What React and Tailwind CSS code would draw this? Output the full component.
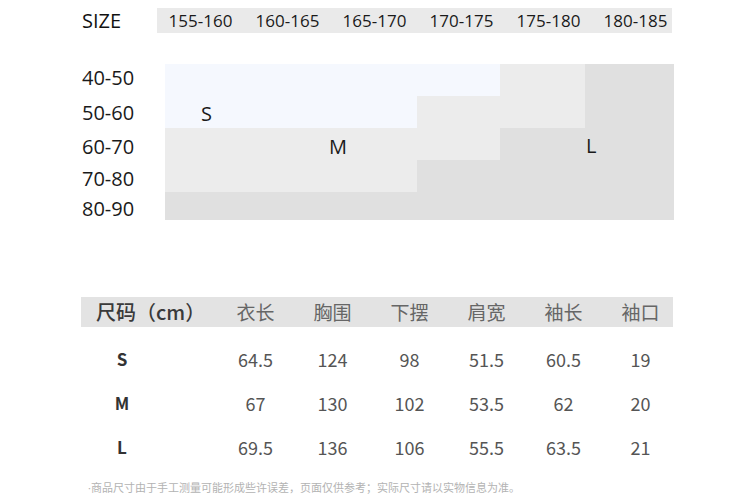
import React from "react";

const heights = ["155-160", "160-165", "165-170", "170-175", "175-180", "180-185"];
const weights = [
  { label: "40-50", h: "h-[35px]" },
  { label: "50-60", h: "h-[35px]" },
  { label: "60-70", h: "h-[33px]" },
  { label: "70-80", h: "h-[31px]" },
  { label: "80-90", h: "h-[30px]" },
];

const S = "bg-[#f5f8fe]";
const M = "bg-[#ececec]";
const L = "bg-[#e0e0e0]";

const headers = ["衣长", "胸围", "下摆", "肩宽", "袖长", "袖口"];
const rows = [
  { size: "S", values: ["64.5", "124", "98", "51.5", "60.5", "19"] },
  { size: "M", values: ["67", "130", "102", "53.5", "62", "20"] },
  { size: "L", values: ["69.5", "136", "106", "55.5", "63.5", "21"] },
];

export default function App() {
  return (
    <div className="w-[748px] h-[504px] bg-white overflow-hidden pt-[8px] pl-[81px] font-['Open_Sans','Noto_Sans_CJK_SC',sans-serif]">
      {/* Size / height header */}
      <div className="flex items-center h-[25px]">
        <div className="w-[76px] pl-[1px] text-[20px] leading-none text-[#111]">SIZE</div>
        <div className="flex w-[515px] h-[25px] bg-[#eaeaea]">
          {heights.map((h) => (
            <div
              key={h}
              className="w-[87px] shrink-0 flex items-center justify-center text-[17px] text-[#1a1a1a]"
            >
              {h}
            </div>
          ))}
        </div>
      </div>

      {/* Weight x height chart */}
      <div className="flex items-start mt-[27px]">
        <div className="w-[84px] pl-[1px] flex flex-col">
          {weights.map((w) => (
            <div key={w.label} className={`${w.h} flex items-center text-[20px] text-[#1a1a1a]`}>
              {w.label}
            </div>
          ))}
        </div>
        <div className="mt-[4px] w-[509px] flex flex-col text-[20px] text-[#1a1a1a]">
          <div className="flex h-[32px]">
            <div className={`w-[335px] ${S}`} />
            <div className={`w-[85px] ${M}`} />
            <div className={`w-[89px] ${L}`} />
          </div>
          <div className="flex h-[32px]">
            <div className={`w-[252px] ${S} flex items-center pl-[36px] pt-[4px]`}>S</div>
            <div className={`w-[168px] ${M}`} />
            <div className={`w-[89px] ${L}`} />
          </div>
          <div className="flex h-[32px]">
            <div className={`w-[335px] ${M} flex items-center pl-[164px] pt-[6px]`}>M</div>
            <div className={`w-[174px] ${L} flex items-center pl-[86px] pt-[4px]`}>L</div>
          </div>
          <div className="flex h-[32px]">
            <div className={`w-[252px] ${M}`} />
            <div className={`w-[257px] ${L}`} />
          </div>
          <div className={`h-[28px] ${L}`} />
        </div>
      </div>

      {/* Measurement table */}
      <div className="mt-[73px] font-['Noto_Sans_CJK_SC',sans-serif]">
        <div className="w-[592px] h-[30px] bg-[#e3e3e3]">
          <div className="grid grid-cols-[136px_repeat(6,77px)] h-full items-center">
            <div className="pl-[15px] text-[20px] font-medium text-[#3a3a3a] whitespace-nowrap">
              尺码（cm）
            </div>
            {headers.map((h) => (
              <div key={h} className="text-center text-[19px] text-[#666]">
                {h}
              </div>
            ))}
          </div>
        </div>
        <div className="mt-[10px]">
          {rows.map((r) => (
            <div key={r.size} className="grid grid-cols-[136px_repeat(6,77px)] h-[44px] items-center">
              <div className="w-[82px] text-center text-[17px] font-bold text-[#333]">{r.size}</div>
              {r.values.map((v, i) => (
                <div key={i} className="text-center text-[18px] text-[#555]">
                  {v}
                </div>
              ))}
            </div>
          ))}
        </div>
      </div>

      {/* Footnote */}
      <div className="mt-[10px] pl-[7px] text-[11px] leading-[16px] text-[#b3b3b3] font-['Noto_Sans_CJK_SC',sans-serif]">
        <span className="font-['Open_Sans',sans-serif]">·</span>
        商品尺寸由于手工测量可能形成些许误差，页面仅供参考；实际尺寸请以实物信息为准。
      </div>
    </div>
  );
}
